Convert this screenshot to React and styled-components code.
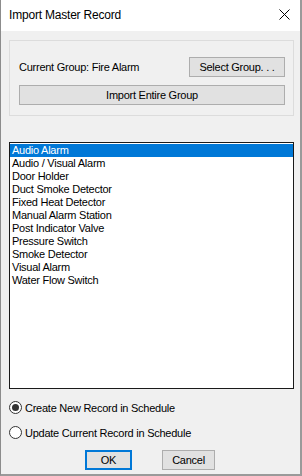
import React, { useState } from "react";
import styled, { createGlobalStyle } from "styled-components";

const GlobalStyle = createGlobalStyle`
  html, body {
    margin: 0;
    padding: 0;
    background: #ffffff;
  }
  body {
    font-family: "Liberation Sans", Arial, sans-serif;
    font-size: 11px;
    letter-spacing: -0.25px;
    color: #000;
  }
`;

const items = [
  "Audio Alarm",
  "Audio / Visual Alarm",
  "Door Holder",
  "Duct Smoke Detector",
  "Fixed Heat Detector",
  "Manual Alarm Station",
  "Post Indicator Valve",
  "Pressure Switch",
  "Smoke Detector",
  "Visual Alarm",
  "Water Flow Switch",
];

function App() {
  const [selected, setSelected] = useState(0);
  const [mode, setMode] = useState("create");

  return (
    <>
      <GlobalStyle />
      <Dialog>
        <TitleBar>
          <Title>Import Master Record</Title>
          <CloseButton aria-label="Close">
            <svg width="11" height="11" viewBox="0 0 11 11">
              <path d="M0.5 0.5 L10.5 10.5 M10.5 0.5 L0.5 10.5" stroke="#000" strokeWidth="1" fill="none" />
            </svg>
          </CloseButton>
        </TitleBar>
        <Body>
          <GroupBox>
            <GroupRow>
              <Label>Current Group: Fire Alarm</Label>
              <Button $width="96px">Select Group. . .</Button>
            </GroupRow>
            <Button $full>Import Entire Group</Button>
          </GroupBox>

          <ListBox>
            {items.map((item, i) => (
              <ListItem key={item} $active={i === selected} onClick={() => setSelected(i)}>
                {item}
              </ListItem>
            ))}
          </ListBox>

          <Options>
            <RadioRow onClick={() => setMode("create")}>
              <RadioDot $checked={mode === "create"} />
              Create New Record in Schedule
            </RadioRow>
            <RadioRow onClick={() => setMode("update")}>
              <RadioDot $checked={mode === "update"} />
              Update Current Record in Schedule
            </RadioRow>
          </Options>

          <Footer>
            <Button $width="47px" $default>OK</Button>
            <Button $width="53px">Cancel</Button>
          </Footer>
        </Body>
      </Dialog>
    </>
  );
}

const Dialog = styled.div`
  width: 302px;
  height: 476px;
  box-sizing: border-box;
  border-left: 1px solid #8c8c8c;
  border-right: 2px solid #9a9a9a;
  border-bottom: 2px solid #9a9a9a;
  background: #f0f0f0;
  display: flex;
  flex-direction: column;
`;

const TitleBar = styled.div`
  height: 31px;
  background: #ffffff;
  display: flex;
  align-items: center;
  justify-content: space-between;
  padding: 0 10px 0 8px;
`;

const Title = styled.div`
  font-size: 12px;
  letter-spacing: -0.2px;
  padding-bottom: 2px;
`;

const CloseButton = styled.div`
  display: flex;
  align-items: center;
  padding-bottom: 2px;
`;

const Body = styled.div`
  flex: 1;
  display: flex;
  flex-direction: column;
  padding: 9px 6px 0 8px;
`;

const GroupBox = styled.div`
  height: 76px;
  box-sizing: border-box;
  border: 1px solid #dcdcdc;
  padding: 16px 8px 0 9px;
  display: flex;
  flex-direction: column;
  gap: 8px;
`;

const GroupRow = styled.div`
  display: flex;
  align-items: center;
  justify-content: space-between;
`;

const Label = styled.span`
  font-size: 11px;
`;

const Button = styled.button`
  height: 20px;
  width: ${(p) => (p.$full ? "100%" : p.$width || "auto")};
  box-sizing: border-box;
  margin: 0;
  padding: 0;
  font-family: inherit;
  font-size: 11px;
  letter-spacing: -0.25px;
  color: #000;
  background: #e1e1e1;
  border: ${(p) => (p.$default ? "2px solid #0078d7" : "1px solid #adadad")};
  border-radius: 0;
`;

const ListBox = styled.div`
  margin-top: 26px;
  height: 247px;
  box-sizing: border-box;
  border: 1px solid #1a1a1a;
  background: #ffffff;
  padding-top: 1px;
`;

const ListItem = styled.div`
  height: 13px;
  line-height: 13px;
  padding-left: 2px;
  font-size: 11px;
  background: ${(p) => (p.$active ? "#0078d7" : "transparent")};
  color: ${(p) => (p.$active ? "#ffffff" : "#000")};
  cursor: default;
`;

const Options = styled.div`
  display: flex;
  flex-direction: column;
  gap: 12px;
  margin-top: 12px;
`;

const RadioRow = styled.label`
  display: flex;
  align-items: center;
  gap: 3px;
  height: 13px;
  font-size: 11px;
  cursor: default;
`;

const RadioDot = styled.span`
  width: 13px;
  height: 13px;
  box-sizing: border-box;
  border-radius: 50%;
  border: 1px solid #333333;
  background: #ffffff;
  display: flex;
  align-items: center;
  justify-content: center;
  &::after {
    content: "";
    width: 7px;
    height: 7px;
    border-radius: 50%;
    background: ${(p) => (p.$checked ? "#333333" : "transparent")};
  }
`;

const Footer = styled.div`
  display: flex;
  justify-content: center;
  gap: 30px;
  margin-top: 11px;
  padding-right: 3px;
`;

export default App;
